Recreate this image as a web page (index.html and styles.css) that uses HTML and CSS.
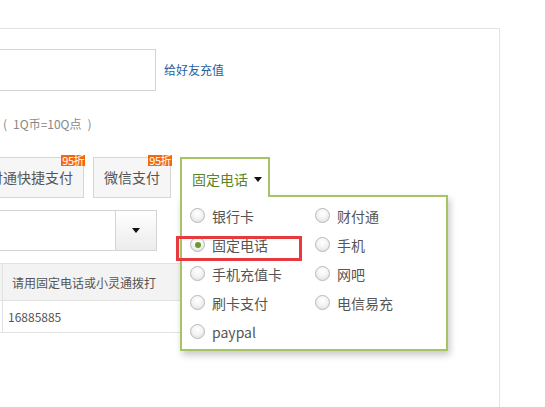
FILE: index.html
```html
<!DOCTYPE html>
<html>
<head>
<meta charset="utf-8">
<link rel="stylesheet" href="styles.css">
</head>
<body>
<div class="page">
  <div class="panel">
    <div class="content">
      <div class="row-account">
        <div class="text-input"></div>
        <a class="friend-link">给好友充值</a>
      </div>
      <div class="note"><span class="paren">(</span>1Q币=10Q点<span class="paren">)</span></div>
      <div class="pay-tabs">
        <div class="pay-btn pay-btn-wide">财付通快捷支付<span class="badge">95折</span></div>
        <div class="pay-btn">微信支付<span class="badge">95折</span></div>
        <div class="more-tab">
          <div class="more-label">固定电话<span class="caret"></span></div>
          <div class="menu">
            <div class="menu-grid">
              <div class="opt"><span class="radio"></span>银行卡</div>
              <div class="opt"><span class="radio"></span>财付通</div>
              <div class="opt"><span class="radio checked"></span>固定电话</div>
              <div class="opt"><span class="radio"></span>手机</div>
              <div class="opt"><span class="radio"></span>手机充值卡</div>
              <div class="opt"><span class="radio"></span>网吧</div>
              <div class="opt"><span class="radio"></span>刷卡支付</div>
              <div class="opt"><span class="radio"></span>电信易充</div>
              <div class="opt"><span class="radio"></span>paypal</div>
            </div>
            <div class="highlight"></div>
          </div>
        </div>
      </div>
      <div class="select">
        <div class="select-value"></div>
        <div class="select-btn"><span class="caret"></span></div>
      </div>
      <div class="table">
        <div class="tr th">
          <div class="cell c1"></div>
          <div class="cell c2 head">请用固定电话或小灵通拨打</div>
        </div>
        <div class="tr">
          <div class="cell c1"></div>
          <div class="cell c2 num">16885885</div>
        </div>
      </div>
    </div>
  </div>
</div>
</body>
</html>
```

FILE: styles.css
```css
html, body {
  margin: 0;
  padding: 0;
  background: #fff;
}
body {
  width: 545px;
  height: 407px;
  overflow: hidden;
  font-family: "Noto Sans CJK SC", "Microsoft YaHei", sans-serif;
  color: #555;
}
.page {
  padding-top: 28px;
}
.panel {
  width: 500px;
  height: 379px;
  box-sizing: border-box;
  border-top: 1px solid #e3e3e3;
  border-right: 1px solid #e3e3e3;
}
.content {
  margin-left: -40px;
  padding-top: 20px;
}
.row-account {
  display: flex;
  align-items: center;
  gap: 8px;
}
.text-input {
  width: 196px;
  height: 42px;
  box-sizing: border-box;
  border: 1px solid #d4d4d4;
  background: #fff;
}
.friend-link {
  font-size: 12px;
  color: #1f5f9e;
  line-height: 18px;
}
.note {
  margin-top: 24px;
  padding-left: 43px;
  font-size: 12px;
  line-height: 18px;
  color: #888;
}
.paren {
  display: inline-block;
  margin: 0 6px 0 0;
}
.paren + .paren,
.note .paren:last-child {
  margin: 0 0 0 6px;
}
.pay-tabs {
  margin-top: 24px;
  display: flex;
  gap: 9px;
  align-items: flex-start;
  height: 41px;
}
.pay-btn {
  position: relative;
  height: 41px;
  box-sizing: border-box;
  padding: 0 10px;
  border: 1px solid #d6d6d6;
  background: #f6f6f6;
  font-size: 14px;
  line-height: 39px;
  color: #555;
  white-space: nowrap;
}
.pay-btn-wide {
  margin-left: 4px;
}
.badge {
  position: absolute;
  top: -3px;
  right: -2px;
  height: 11px;
  padding: 0 1px;
  background: #f36a0e;
  color: #fff;
  font-size: 11px;
  line-height: 11px;
  letter-spacing: -0.5px;
}
.more-tab {
  position: relative;
}
.more-label {
  position: relative;
  z-index: 3;
  width: 90px;
  height: 40px;
  box-sizing: border-box;
  border: 2px solid #a7c465;
  border-bottom: none;
  background: #fff;
  padding-left: 10px;
  font-size: 14px;
  line-height: 40px;
  color: #5a8527;
  white-space: nowrap;
}
.caret {
  display: inline-block;
  width: 0;
  height: 0;
  border-left: 4px solid transparent;
  border-right: 4px solid transparent;
  border-top: 5px solid #111;
  vertical-align: middle;
  margin-left: 6px;
  margin-top: -3px;
}
.menu {
  position: absolute;
  z-index: 2;
  left: 0;
  top: 38px;
  width: 268px;
  height: 156px;
  box-sizing: border-box;
  border: 2px solid #a7c465;
  background: #fff;
  box-shadow: 2px 4px 7px rgba(0, 0, 0, 0.22);
  padding: 4px 0 0 8px;
}
.menu-grid {
  display: grid;
  grid-template-columns: 125px 125px;
  grid-auto-rows: 29px;
}
.opt {
  display: flex;
  align-items: center;
  gap: 7px;
  font-size: 14px;
  color: #555;
  white-space: nowrap;
}
.radio {
  position: relative;
  width: 15px;
  height: 15px;
  box-sizing: border-box;
  border-radius: 50%;
  border: 1px solid #b8b8b8;
  background: radial-gradient(circle at 50% 35%, #ffffff 0%, #f4f4f4 45%, #dcdcdc 100%);
  flex: none;
}
.radio.checked::after {
  content: "";
  position: absolute;
  left: 3.5px;
  top: 3.5px;
  width: 6px;
  height: 6px;
  border-radius: 50%;
  background: #6d9a2c;
}
.highlight {
  position: absolute;
  left: -6px;
  top: 39px;
  width: 126px;
  height: 25px;
  box-sizing: border-box;
  border: 3px solid #e63a3f;
}
.select {
  margin-top: 12px;
  display: flex;
  width: 197px;
  height: 41px;
  box-sizing: border-box;
  border: 1px solid #d4d4d4;
}
.select-value {
  flex: 1;
  background: #fff;
}
.select-btn {
  width: 40px;
  border-left: 1px solid #d4d4d4;
  background: linear-gradient(#ffffff, #ececec);
  display: flex;
  align-items: center;
  justify-content: center;
}
.select-btn .caret {
  margin: 0;
}
.table {
  margin-top: 12px;
  width: 480px;
  font-size: 12px;
}
.tr {
  display: flex;
  border-top: 1px solid #e2e2e2;
  border-bottom: 1px solid #e2e2e2;
}
.tr + .tr {
  border-top: none;
}
.th {
  height: 36px;
  background: #f3f3f3;
}
.tr:not(.th) {
  height: 31px;
}
.cell {
  display: flex;
  align-items: center;
}
.c1 {
  width: 42px;
  border-right: 1px solid #e2e2e2;
}
.c2 {
  flex: 1;
}
.head {
  padding-left: 9px;
  color: #555;
}
.num {
  padding-left: 5px;
  color: #555;
}
```
